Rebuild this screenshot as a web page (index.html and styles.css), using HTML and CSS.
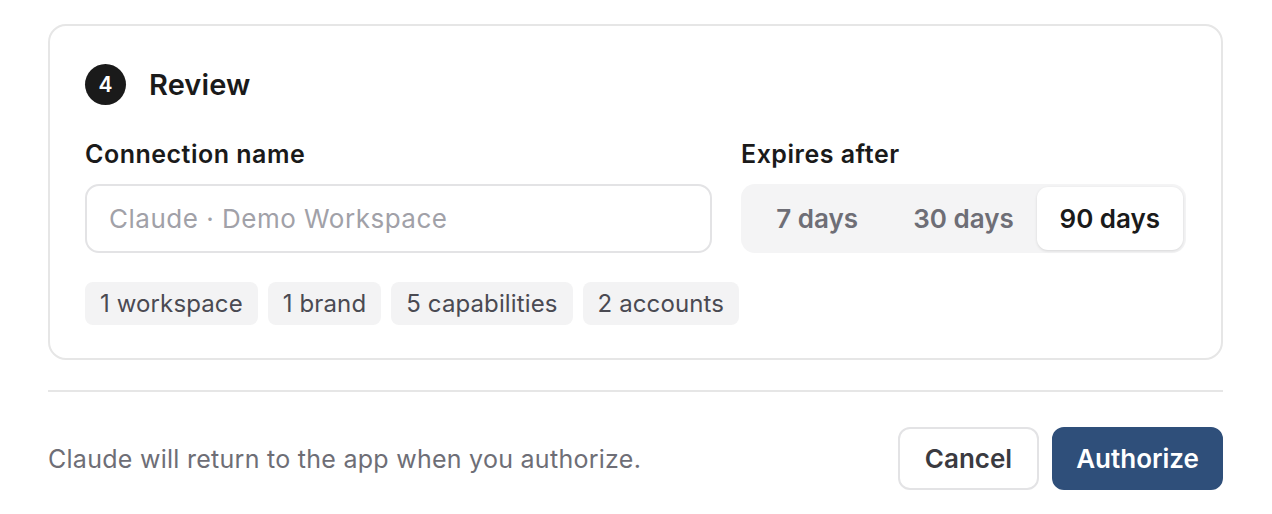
FILE: index.html
```html
<!DOCTYPE html>
<html>
<head>
<meta charset="utf-8">
<link rel="stylesheet" href="styles.css">
</head>
<body>
<div class="page">
  <section class="card">
    <div class="step-head">
      <span class="step-num">4</span>
      <h2 class="step-title">Review</h2>
    </div>
    <div class="fields">
      <div class="field">
        <label class="label">Connection name</label>
        <input class="input" type="text" placeholder="Claude · Demo Workspace">
      </div>
      <div class="field">
        <label class="label">Expires after</label>
        <div class="segmented">
          <button class="seg">7 days</button>
          <button class="seg">30 days</button>
          <button class="seg seg-active">90 days</button>
        </div>
      </div>
    </div>
    <div class="chips">
      <span class="chip">1 workspace</span>
      <span class="chip">1 brand</span>
      <span class="chip">5 capabilities</span>
      <span class="chip">2 accounts</span>
    </div>
  </section>
  <div class="divider"></div>
  <footer class="footer">
    <p class="note">Claude will return to the app when you authorize.</p>
    <div class="actions">
      <button class="btn btn-secondary">Cancel</button>
      <button class="btn btn-primary">Authorize</button>
    </div>
  </footer>
</div>
</body>
</html>
```
FILE: styles.css
```css
* { box-sizing: border-box; }
html, body { margin: 0; padding: 0; background: #ffffff; }
body {
  font-family: Inter, "Noto Sans", "Liberation Sans", sans-serif;
  color: #1a1a1a;
}
.page {
  padding: 24px 49px 24px 48px;
}
.card {
  border: 2px solid #e6e6e6;
  border-radius: 18px;
  padding: 38px 35px 33px 35px;
}
.step-head {
  display: flex;
  align-items: center;
  gap: 23px;
  height: 41px;
}
.step-num {
  width: 41px;
  height: 41px;
  border-radius: 50%;
  background: #1a1a1a;
  color: #fff;
  font-size: 21px;
  font-weight: 600;
  display: flex;
  align-items: center;
  justify-content: center;
}
.step-title {
  margin: 0;
  font-size: 29px;
  font-weight: 600;
  letter-spacing: 0.1px;
  color: #1a1a1a;
}
.fields {
  display: grid;
  grid-template-columns: 1fr 445px;
  column-gap: 29px;
  margin-top: 34px;
}
.field {
  display: flex;
  flex-direction: column;
  gap: 15px;
}
.label {
  font-size: 25px;
  font-weight: 600;
  line-height: 30px;
  letter-spacing: 0.5px;
  color: #1a1a1a;
}
.input {
  height: 69px;
  border: 2px solid #e3e3e5;
  border-radius: 14px;
  padding: 0 22px;
  font-family: inherit;
  font-size: 26px;
  letter-spacing: 0.5px;
  color: #1a1a1a;
  outline: none;
}
.input::placeholder { color: #a1a1a8; }
.segmented {
  display: flex;
  height: 69px;
  background: #f4f4f5;
  border-radius: 14px;
  padding: 3px;
}
.seg {
  flex: 1;
  border: none;
  background: transparent;
  font-family: inherit;
  font-size: 26px;
  font-weight: 600;
  color: #6e6e76;
  border-radius: 11px;
  cursor: pointer;
}
.seg-active {
  background: #ffffff;
  color: #1a1a1a;
  box-shadow: 0 1px 3px rgba(0,0,0,0.12);
}
.chips {
  display: flex;
  gap: 10px;
  margin-top: 29px;
}
.chip {
  height: 43px;
  display: flex;
  align-items: center;
  padding: 0 15px;
  background: #f3f3f4;
  border-radius: 8px;
  font-size: 24px;
  letter-spacing: 0.12px;
  color: #4a4a52;
}
.divider {
  height: 2px;
  background: #e6e6e6;
  margin-top: 30px;
}
.footer {
  display: flex;
  align-items: center;
  justify-content: space-between;
  margin-top: 35px;
}
.note {
  margin: 0;
  font-size: 25px;
  letter-spacing: 0.27px;
  color: #6e6e76;
}
.actions {
  display: flex;
  gap: 13px;
}
.btn {
  height: 63px;
  border-radius: 12px;
  font-family: inherit;
  font-size: 26px;
  font-weight: 600;
  cursor: pointer;
}
.btn-secondary {
  padding: 0 25px;
  background: #fff;
  border: 2px solid #e3e3e5;
  color: #3a3a40;
}
.btn-primary {
  padding: 0 22px;
  background: #2f4f7a;
  border: 2px solid #2f4f7a;
  color: #fff;
}
```
